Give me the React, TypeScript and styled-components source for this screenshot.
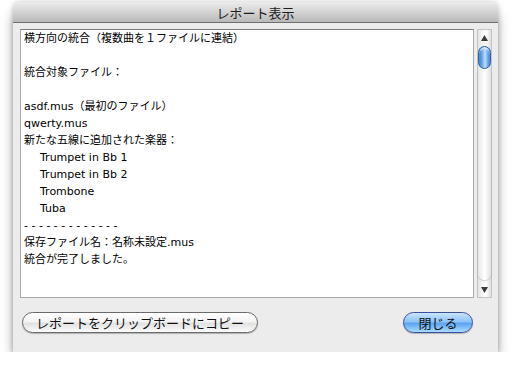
import styled, { createGlobalStyle } from "styled-components";

const GlobalStyle = createGlobalStyle`
  body {
    margin: 0;
    background: #ffffff;
    font-family: "DejaVu Sans", "Noto Sans CJK JP", sans-serif;
  }
`;

const Window = styled.div`
  margin: 2px 0 0 13px;
  width: 485px;
  height: 350px;
  background: #ececec;
  border-radius: 6px 6px 0 0;
  box-shadow: 0 9px 14px -3px rgba(0, 0, 0, 0.55), 0 0 5px rgba(0, 0, 0, 0.2);
  display: flex;
  flex-direction: column;
  overflow: hidden;
`;

const TitleBar = styled.div`
  height: 20px;
  flex-shrink: 0;
  display: flex;
  align-items: center;
  justify-content: center;
  background: linear-gradient(#ececec, #d6d6d6 45%, #b9b9b9);
  border-bottom: 1px solid #6f6f6f;
  font-family: "Noto Sans CJK JP", sans-serif;
  font-size: 13px;
  color: #1c1c1c;
`;

const Body = styled.div`
  flex: 1;
  display: flex;
  flex-direction: column;
  padding: 6px 6px 19px 7px;
`;

const ReportRow = styled.div`
  display: flex;
  gap: 3px;
  height: 269px;
`;

const Report = styled.div`
  flex: 1;
  background: #ffffff;
  border: 1px solid #a9a9a9;
  border-top-color: #7d7d7d;
  padding: 0 3px;
  font-size: 11px;
  line-height: 17px;
  color: #000;
`;

const Line = styled.div<{ $indent?: boolean }>`
  height: 17px;
  white-space: pre;
  padding-left: ${({ $indent }) => ($indent ? "16px" : "0")};
`;

const ScrollBar = styled.div`
  width: 15px;
  display: flex;
  flex-direction: column;
  background: linear-gradient(90deg, #e4e4e4, #f6f6f6 40%, #ffffff 60%, #dcdcdc);
  border: 1px solid #c4c4c4;
  box-sizing: border-box;
`;

const Arrow = styled.div`
  height: 15px;
  display: flex;
  align-items: center;
  justify-content: center;
  flex-shrink: 0;
`;

const Track = styled.div`
  flex: 1;
  display: flex;
  flex-direction: column;
  padding: 1px 0 0;
`;

const Thumb = styled.div`
  height: 21px;
  border-radius: 7px;
  border: 1px solid #2b5ea6;
  background: linear-gradient(90deg, #2f6fce, #7fb6f2 35%, #bfe0ff 55%, #5d9ae6 85%, #2f6fce);
  box-shadow: inset 0 2px 2px rgba(255, 255, 255, 0.6);
`;

const TrackEnd = styled.div`
  flex: 1;
  margin: 2px 0;
  border-radius: 0 0 7px 7px;
  background: linear-gradient(90deg, #e6e6e6, #ffffff 50%, #e2e2e2);
  box-shadow: 0 1px 2px rgba(0, 0, 0, 0.2);
`;

const ButtonRow = styled.div`
  display: flex;
  justify-content: space-between;
  align-items: center;
  margin-top: 14px;
  padding-left: 2px;
`;

const PillButton = styled.button<{ $primary?: boolean }>`
  height: 21px;
  border-radius: 11px;
  font-family: "Noto Sans CJK JP", sans-serif;
  font-size: 13px;
  line-height: 19px;
  color: #111;
  padding: 0;
  cursor: default;
  border: 1px solid ${({ $primary }) => ($primary ? "#3b4f9e" : "#6b6b6b")};
  background: ${({ $primary }) =>
    $primary
      ? "linear-gradient(#c8e4ff, #8ec4f6 45%, #5da4ee 55%, #a8dcff)"
      : "linear-gradient(#ffffff, #f4f4f4 45%, #e2e2e2 55%, #fbfbfb)"};
  box-shadow: 0 1px 1px rgba(0, 0, 0, 0.25);
  width: ${({ $primary }) => ($primary ? "70px" : "236px")};
  margin-right: ${({ $primary }) => ($primary ? "19px" : "0")};
`;

const lines: { text: string; indent?: boolean }[] = [
  { text: "横方向の統合（複数曲を１ファイルに連結）" },
  { text: "" },
  { text: "統合対象ファイル：" },
  { text: "" },
  { text: "asdf.mus（最初のファイル）" },
  { text: "qwerty.mus" },
  { text: "新たな五線に追加された楽器：" },
  { text: "Trumpet in Bb 1", indent: true },
  { text: "Trumpet in Bb 2", indent: true },
  { text: "Trombone", indent: true },
  { text: "Tuba", indent: true },
  { text: "- - - - - - - - - - - - -" },
  { text: "保存ファイル名：名称未設定.mus" },
  { text: "統合が完了しました。" },
];

export default function App() {
  return (
    <>
      <GlobalStyle />
      <Window>
        <TitleBar>レポート表示</TitleBar>
        <Body>
          <ReportRow>
            <Report>
              {lines.map((l, i) => (
                <Line key={i} $indent={l.indent}>
                  {l.text}
                </Line>
              ))}
            </Report>
            <ScrollBar>
              <Arrow>
                <svg width="7" height="6" viewBox="0 0 7 6">
                  <path d="M3.5 0 L7 6 L0 6 Z" fill="#3a3a3a" />
                </svg>
              </Arrow>
              <Track>
                <Thumb />
                <TrackEnd />
              </Track>
              <Arrow>
                <svg width="7" height="6" viewBox="0 0 7 6">
                  <path d="M0 0 L7 0 L3.5 6 Z" fill="#3a3a3a" />
                </svg>
              </Arrow>
            </ScrollBar>
          </ReportRow>
          <ButtonRow>
            <PillButton>レポートをクリップボードにコピー</PillButton>
            <PillButton $primary>閉じる</PillButton>
          </ButtonRow>
        </Body>
      </Window>
    </>
  );
}
